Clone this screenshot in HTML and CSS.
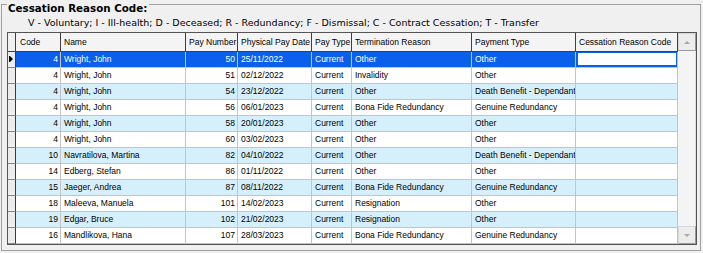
FILE: index.html
```html
<!DOCTYPE html>
<html>
<head>
<meta charset="utf-8">
<link rel="stylesheet" href="styles.css">
</head>
<body>
<div class="panel">
  <div class="title">Cessation Reason Code:</div>
  <div class="legend">V - Voluntary; I - Ill-health; D - Deceased; R - Redundancy; F - Dismissal; C - Contract Cessation; T - Transfer</div>
  <div class="grid">
    <div class="table">
      <div class="row head">
        <div class="c ind"></div>
        <div class="c code">Code</div>
        <div class="c name">Name</div>
        <div class="c pnum">Pay Number</div>
        <div class="c pdate">Physical Pay Date</div>
        <div class="c ptype">Pay Type</div>
        <div class="c term">Termination Reason</div>
        <div class="c paym">Payment Type</div>
        <div class="c cess">Cessation Reason Code</div>
      </div>
      <div class="row sel">
        <div class="c ind"><span class="arrow"></span></div>
        <div class="c code r">4</div><div class="c name">Wright, John</div><div class="c pnum r">50</div><div class="c pdate">25/11/2022</div><div class="c ptype">Current</div><div class="c term">Other</div><div class="c paym">Other</div><div class="c cess"><div class="edit"></div></div>
      </div>
      <div class="row">
        <div class="c ind"></div>
        <div class="c code r">4</div><div class="c name">Wright, John</div><div class="c pnum r">51</div><div class="c pdate">02/12/2022</div><div class="c ptype">Current</div><div class="c term">Invalidity</div><div class="c paym">Other</div><div class="c cess"></div>
      </div>
      <div class="row alt">
        <div class="c ind"></div>
        <div class="c code r">4</div><div class="c name">Wright, John</div><div class="c pnum r">54</div><div class="c pdate">23/12/2022</div><div class="c ptype">Current</div><div class="c term">Other</div><div class="c paym">Death Benefit - Dependant</div><div class="c cess"></div>
      </div>
      <div class="row">
        <div class="c ind"></div>
        <div class="c code r">4</div><div class="c name">Wright, John</div><div class="c pnum r">56</div><div class="c pdate">06/01/2023</div><div class="c ptype">Current</div><div class="c term">Bona Fide Redundancy</div><div class="c paym">Genuine Redundancy</div><div class="c cess"></div>
      </div>
      <div class="row alt">
        <div class="c ind"></div>
        <div class="c code r">4</div><div class="c name">Wright, John</div><div class="c pnum r">58</div><div class="c pdate">20/01/2023</div><div class="c ptype">Current</div><div class="c term">Other</div><div class="c paym">Other</div><div class="c cess"></div>
      </div>
      <div class="row">
        <div class="c ind"></div>
        <div class="c code r">4</div><div class="c name">Wright, John</div><div class="c pnum r">60</div><div class="c pdate">03/02/2023</div><div class="c ptype">Current</div><div class="c term">Other</div><div class="c paym">Other</div><div class="c cess"></div>
      </div>
      <div class="row alt">
        <div class="c ind"></div>
        <div class="c code r">10</div><div class="c name">Navratilova, Martina</div><div class="c pnum r">82</div><div class="c pdate">04/10/2022</div><div class="c ptype">Current</div><div class="c term">Other</div><div class="c paym">Death Benefit - Dependant</div><div class="c cess"></div>
      </div>
      <div class="row">
        <div class="c ind"></div>
        <div class="c code r">14</div><div class="c name">Edberg, Stefan</div><div class="c pnum r">86</div><div class="c pdate">01/11/2022</div><div class="c ptype">Current</div><div class="c term">Other</div><div class="c paym">Other</div><div class="c cess"></div>
      </div>
      <div class="row alt">
        <div class="c ind"></div>
        <div class="c code r">15</div><div class="c name">Jaeger, Andrea</div><div class="c pnum r">87</div><div class="c pdate">08/11/2022</div><div class="c ptype">Current</div><div class="c term">Bona Fide Redundancy</div><div class="c paym">Genuine Redundancy</div><div class="c cess"></div>
      </div>
      <div class="row">
        <div class="c ind"></div>
        <div class="c code r">18</div><div class="c name">Maleeva, Manuela</div><div class="c pnum r">101</div><div class="c pdate">14/02/2023</div><div class="c ptype">Current</div><div class="c term">Resignation</div><div class="c paym">Other</div><div class="c cess"></div>
      </div>
      <div class="row alt">
        <div class="c ind"></div>
        <div class="c code r">19</div><div class="c name">Edgar, Bruce</div><div class="c pnum r">102</div><div class="c pdate">21/02/2023</div><div class="c ptype">Current</div><div class="c term">Resignation</div><div class="c paym">Other</div><div class="c cess"></div>
      </div>
      <div class="row">
        <div class="c ind"></div>
        <div class="c code r">16</div><div class="c name">Mandlikova, Hana</div><div class="c pnum r">107</div><div class="c pdate">28/03/2023</div><div class="c ptype">Current</div><div class="c term">Bona Fide Redundancy</div><div class="c paym">Genuine Redundancy</div><div class="c cess"></div>
      </div>
    </div>
    <div class="scroll">
      <div class="sbtn"><span class="tri up"></span></div>
      <div class="track"></div>
      <div class="sbtn"><span class="tri down"></span></div>
    </div>
  </div>
</div>
</body>
</html>
```
FILE: styles.css
```css
* { box-sizing: border-box; }
html, body {
  margin: 0;
  padding: 0;
  background: #f0f0f0;
  width: 703px;
  height: 253px;
  overflow: hidden;
}
.panel {
  margin: 4px 0 0 1px;
  width: 700px;
  height: 247px;
  border: 1px solid #a0a0a0;
  padding: 0 0 0 5px;
}
.title {
  display: table;
  margin: -3px 0 0 0;
  padding: 0 2px 0 1px;
  background: #f0f0f0;
  font-family: "DejaVu Sans", sans-serif;
  font-weight: bold;
  font-size: 10.3px;
  line-height: 12px;
  color: #000;
}
.legend {
  margin: 3px 0 0 21px;
  font-family: "DejaVu Sans", sans-serif;
  font-size: 9.5px;
  line-height: 12px;
  color: #000;
  white-space: nowrap;
}
.grid {
  margin-top: 3px;
  width: 690px;
  height: 213px;
  border: 1px solid #555;
  display: flex;
  background: #f0f0f0;
}
.table {
  width: 670px;
  font-family: "Liberation Sans", Arial, sans-serif;
  font-size: 8.5px;
  color: #000;
}
.row {
  display: flex;
  height: 16px;
  background: #fff;
}
.row.alt { background: #d5effc; }
.row.sel { background: #0a60eb; color: #fff; }
.c {
  flex: none;
  height: 16px;
  line-height: 15px;
  padding: 0 3px;
  white-space: nowrap;
  overflow: hidden;
  border-right: 1px solid #c4c4c4;
  border-bottom: 1px solid #c4c4c4;
}
.c.r { text-align: right; padding: 0 2px 0 0; }
.ind {
  width: 8px;
  padding: 0;
  background: #ececec;
  border-right: 1px solid #3a3a3a;
  border-bottom: 1px solid #8a8a8a;
  position: relative;
}
.code { width: 45px; }
.name { width: 125px; }
.pnum { width: 52px; }
.pdate { width: 74px; }
.ptype { width: 40px; }
.term { width: 120px; }
.paym { width: 104px; }
.cess { width: 102px; background: #fff; }
.row.alt .cess { background: #d5effc; }
.row.sel .cess { background: #0a60eb; padding: 1px 1px 1px 2px; }
.edit { background: #fff; height: 12px; width: 98px; }
.head {
  height: 19px;
  background: #f4f4f4;
}
.head .c {
  height: 19px;
  line-height: 18px;
  border-right: 1px solid #3f3f3f;
  border-bottom: 1px solid #3f3f3f;
  background: #f4f4f4;
  padding: 0 3px;
}
.head .code { padding-left: 4px; }
.head .ind { background: #f0f0f0; }
.arrow {
  position: absolute;
  left: 2px;
  top: 4px;
  width: 0;
  height: 0;
  border-top: 3px solid transparent;
  border-bottom: 3px solid transparent;
  border-left: 3px solid #000;
}
.arrow::before {
  content: "";
  position: absolute;
  left: -4px;
  top: -3px;
  width: 1px;
  height: 6px;
  background: #000;
}
.scroll {
  width: 18px;
  display: flex;
  flex-direction: column;
  background: #f0f0f0;
}
.sbtn {
  height: 18px;
  border: 1px solid #d6d6d6;
  border-right-color: #9a9a9a;
  border-bottom-color: #9a9a9a;
  background: #ececec;
  display: flex;
  align-items: center;
  justify-content: center;
}
.track {
  flex: 1;
  background: #f4f4f4;
  border-right: 1px solid #e0e0e0;
}
.tri {
  width: 0;
  height: 0;
  border-left: 3px solid transparent;
  border-right: 3px solid transparent;
}
.tri.up { border-bottom: 3px solid #a8a8a8; }
.tri.down { border-top: 3px solid #a8a8a8; }
```
